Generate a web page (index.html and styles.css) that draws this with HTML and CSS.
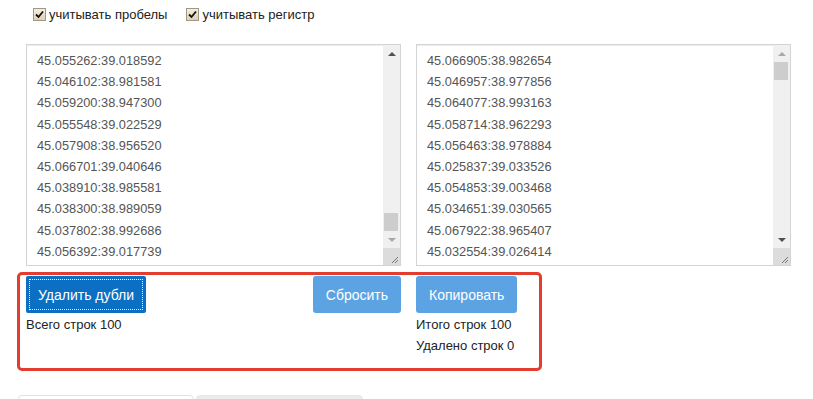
FILE: index.html
```html
<!DOCTYPE html>
<html lang="ru">
<head>
  <meta charset="UTF-8" />
  <title>Удаление дублей строк</title>
  <link rel="stylesheet" href="styles.css">
</head>
<body>
  <div class="page">
    <div class="options">
      <label class="opt">
        <span class="check"><svg width="9" height="9" viewBox="0 0 9 9"><path d="M1 4.5 L3.5 7 L8 1.5" fill="none" stroke="#111" stroke-width="1.8"/></svg></span>
        учитывать пробелы
      </label>
      <label class="opt">
        <span class="check"><svg width="9" height="9" viewBox="0 0 9 9"><path d="M1 4.5 L3.5 7 L8 1.5" fill="none" stroke="#111" stroke-width="1.8"/></svg></span>
        учитывать регистр
      </label>
    </div>

    <div class="boxes">
      <div class="box">
        <div class="lines">
          <div>45.055262:39.018592</div>
          <div>45.046102:38.981581</div>
          <div>45.059200:38.947300</div>
          <div>45.055548:39.022529</div>
          <div>45.057908:38.956520</div>
          <div>45.066701:39.040646</div>
          <div>45.038910:38.985581</div>
          <div>45.038300:38.989059</div>
          <div>45.037802:38.992686</div>
          <div>45.056392:39.017739</div>
        </div>
        <div class="scrollbar">
          <div class="sb-btn up"></div>
          <div class="sb-track"><div class="sb-thumb" style="margin-top:151px"></div></div>
          <div class="sb-btn down off"></div>
          <div class="sb-corner"><svg width="17" height="17" viewBox="0 0 17 17"><path d="M15 9 L9 15 M15 12 L12 15" stroke="#777" stroke-width="1"/></svg></div>
        </div>
      </div>

      <div class="box">
        <div class="lines">
          <div>45.066905:38.982654</div>
          <div>45.046957:38.977856</div>
          <div>45.064077:38.993163</div>
          <div>45.058714:38.962293</div>
          <div>45.056463:38.978884</div>
          <div>45.025837:39.033526</div>
          <div>45.054853:39.003468</div>
          <div>45.034651:39.030565</div>
          <div>45.067922:38.965407</div>
          <div>45.032554:39.026414</div>
        </div>
        <div class="scrollbar">
          <div class="sb-btn up off"></div>
          <div class="sb-track"><div class="sb-thumb" style="margin-top:0"></div></div>
          <div class="sb-btn down"></div>
          <div class="sb-corner"><svg width="17" height="17" viewBox="0 0 17 17"><path d="M15 9 L9 15 M15 12 L12 15" stroke="#777" stroke-width="1"/></svg></div>
        </div>
      </div>
    </div>

    <div class="actions">
      <div class="col">
        <div class="btn-row">
          <button class="btn btn-main">Удалить дубли</button>
          <button class="btn btn-light">Сбросить</button>
        </div>
        <div class="stats">Всего строк 100</div>
      </div>
      <div class="col">
        <div class="btn-row">
          <button class="btn btn-light">Копировать</button>
        </div>
        <div class="stats">
          <div>Итого строк 100</div>
          <div>Удалено строк 0</div>
        </div>
      </div>
      <div class="highlight"></div>
    </div>

    <div class="tabs">
      <div class="tab active"></div>
      <div class="tab"></div>
    </div>
  </div>
</body>
</html>
```

FILE: styles.css
```css
body {
  margin: 0;
  font-family: "Liberation Sans", Arial, sans-serif;
  font-size: 13px;
  color: #222;
  background: #fff;
}
.page {
  padding-left: 26px;
  width: 765px;
}
.options {
  display: flex;
  gap: 19px;
  height: 44px;
  box-sizing: border-box;
  padding: 8px 0 0 7px;
}
.opt {
  display: flex;
  align-items: center;
  gap: 3px;
  height: 13px;
  line-height: 13px;
}
.check {
  width: 13px;
  height: 13px;
  box-sizing: border-box;
  border: 1px solid #a09884;
  background: linear-gradient(#f5eedd, #ddd2b6);
  display: flex;
  align-items: center;
  justify-content: center;
}
.boxes {
  display: grid;
  grid-template-columns: 375px 375px;
  gap: 15px;
}
.box {
  height: 222px;
  box-sizing: border-box;
  border: 1px solid #d4d4d4;
  box-shadow: inset 0 1px 1px rgba(0, 0, 0, 0.075);
  display: flex;
}
.lines {
  flex: 1;
  padding: 5px 10px;
  font-size: 12.8px;
  line-height: 21.2px;
  color: #555;
  overflow: hidden;
}
.scrollbar {
  width: 17px;
  display: flex;
  flex-direction: column;
  background: #f0f0f0;
}
.sb-btn {
  height: 17px;
  display: flex;
  align-items: center;
  justify-content: center;
}
.sb-btn::before {
  content: "";
  width: 0;
  height: 0;
  border-left: 4px solid transparent;
  border-right: 4px solid transparent;
}
.up::before {
  border-bottom: 4px solid #505050;
}
.down::before {
  border-top: 4px solid #505050;
}
.up.off::before {
  border-bottom-color: #a8a8a8;
}
.down.off::before {
  border-top-color: #a8a8a8;
}
.sb-track {
  flex: 1;
}
.sb-thumb {
  height: 18px;
  margin-left: 1px;
  margin-right: 2px;
  background: #cdcdcd;
}
.sb-corner {
  height: 17px;
  background: #dcdcdc;
}
.sb-corner svg {
  display: block;
}
.actions {
  position: relative;
  display: grid;
  grid-template-columns: 375px 375px;
  gap: 15px;
  margin-top: 10px;
}
.btn-row {
  display: flex;
  justify-content: space-between;
}
.btn {
  height: 37px;
  padding: 0 12px;
  border: 0;
  border-radius: 3px;
  font-family: inherit;
  font-size: 14px;
  color: #fff;
}
.btn-main {
  background: #0b6fc4;
  border-radius: 2px;
  outline: 1px dotted #fff;
  outline-offset: -4px;
}
.btn-light {
  background: #5ca3e3;
  padding: 0 13px;
}
.stats {
  margin-top: 1px;
  line-height: 21px;
}
.highlight {
  position: absolute;
  left: -9px;
  top: -4px;
  width: 525px;
  height: 99px;
  box-sizing: border-box;
  border: 3px solid #e23d2e;
  border-radius: 5px;
}
.tabs {
  display: flex;
  gap: 2px;
  margin: 39px 0 0 -8px;
}
.tab {
  width: 176px;
  height: 40px;
  box-sizing: border-box;
  border: 1px solid #e2e2e2;
  border-radius: 4px 4px 0 0;
  background: #fff;
}
.tab + .tab {
  width: 167px;
  background: #ececec;
  border-color: #e6e6e6;
}
```
